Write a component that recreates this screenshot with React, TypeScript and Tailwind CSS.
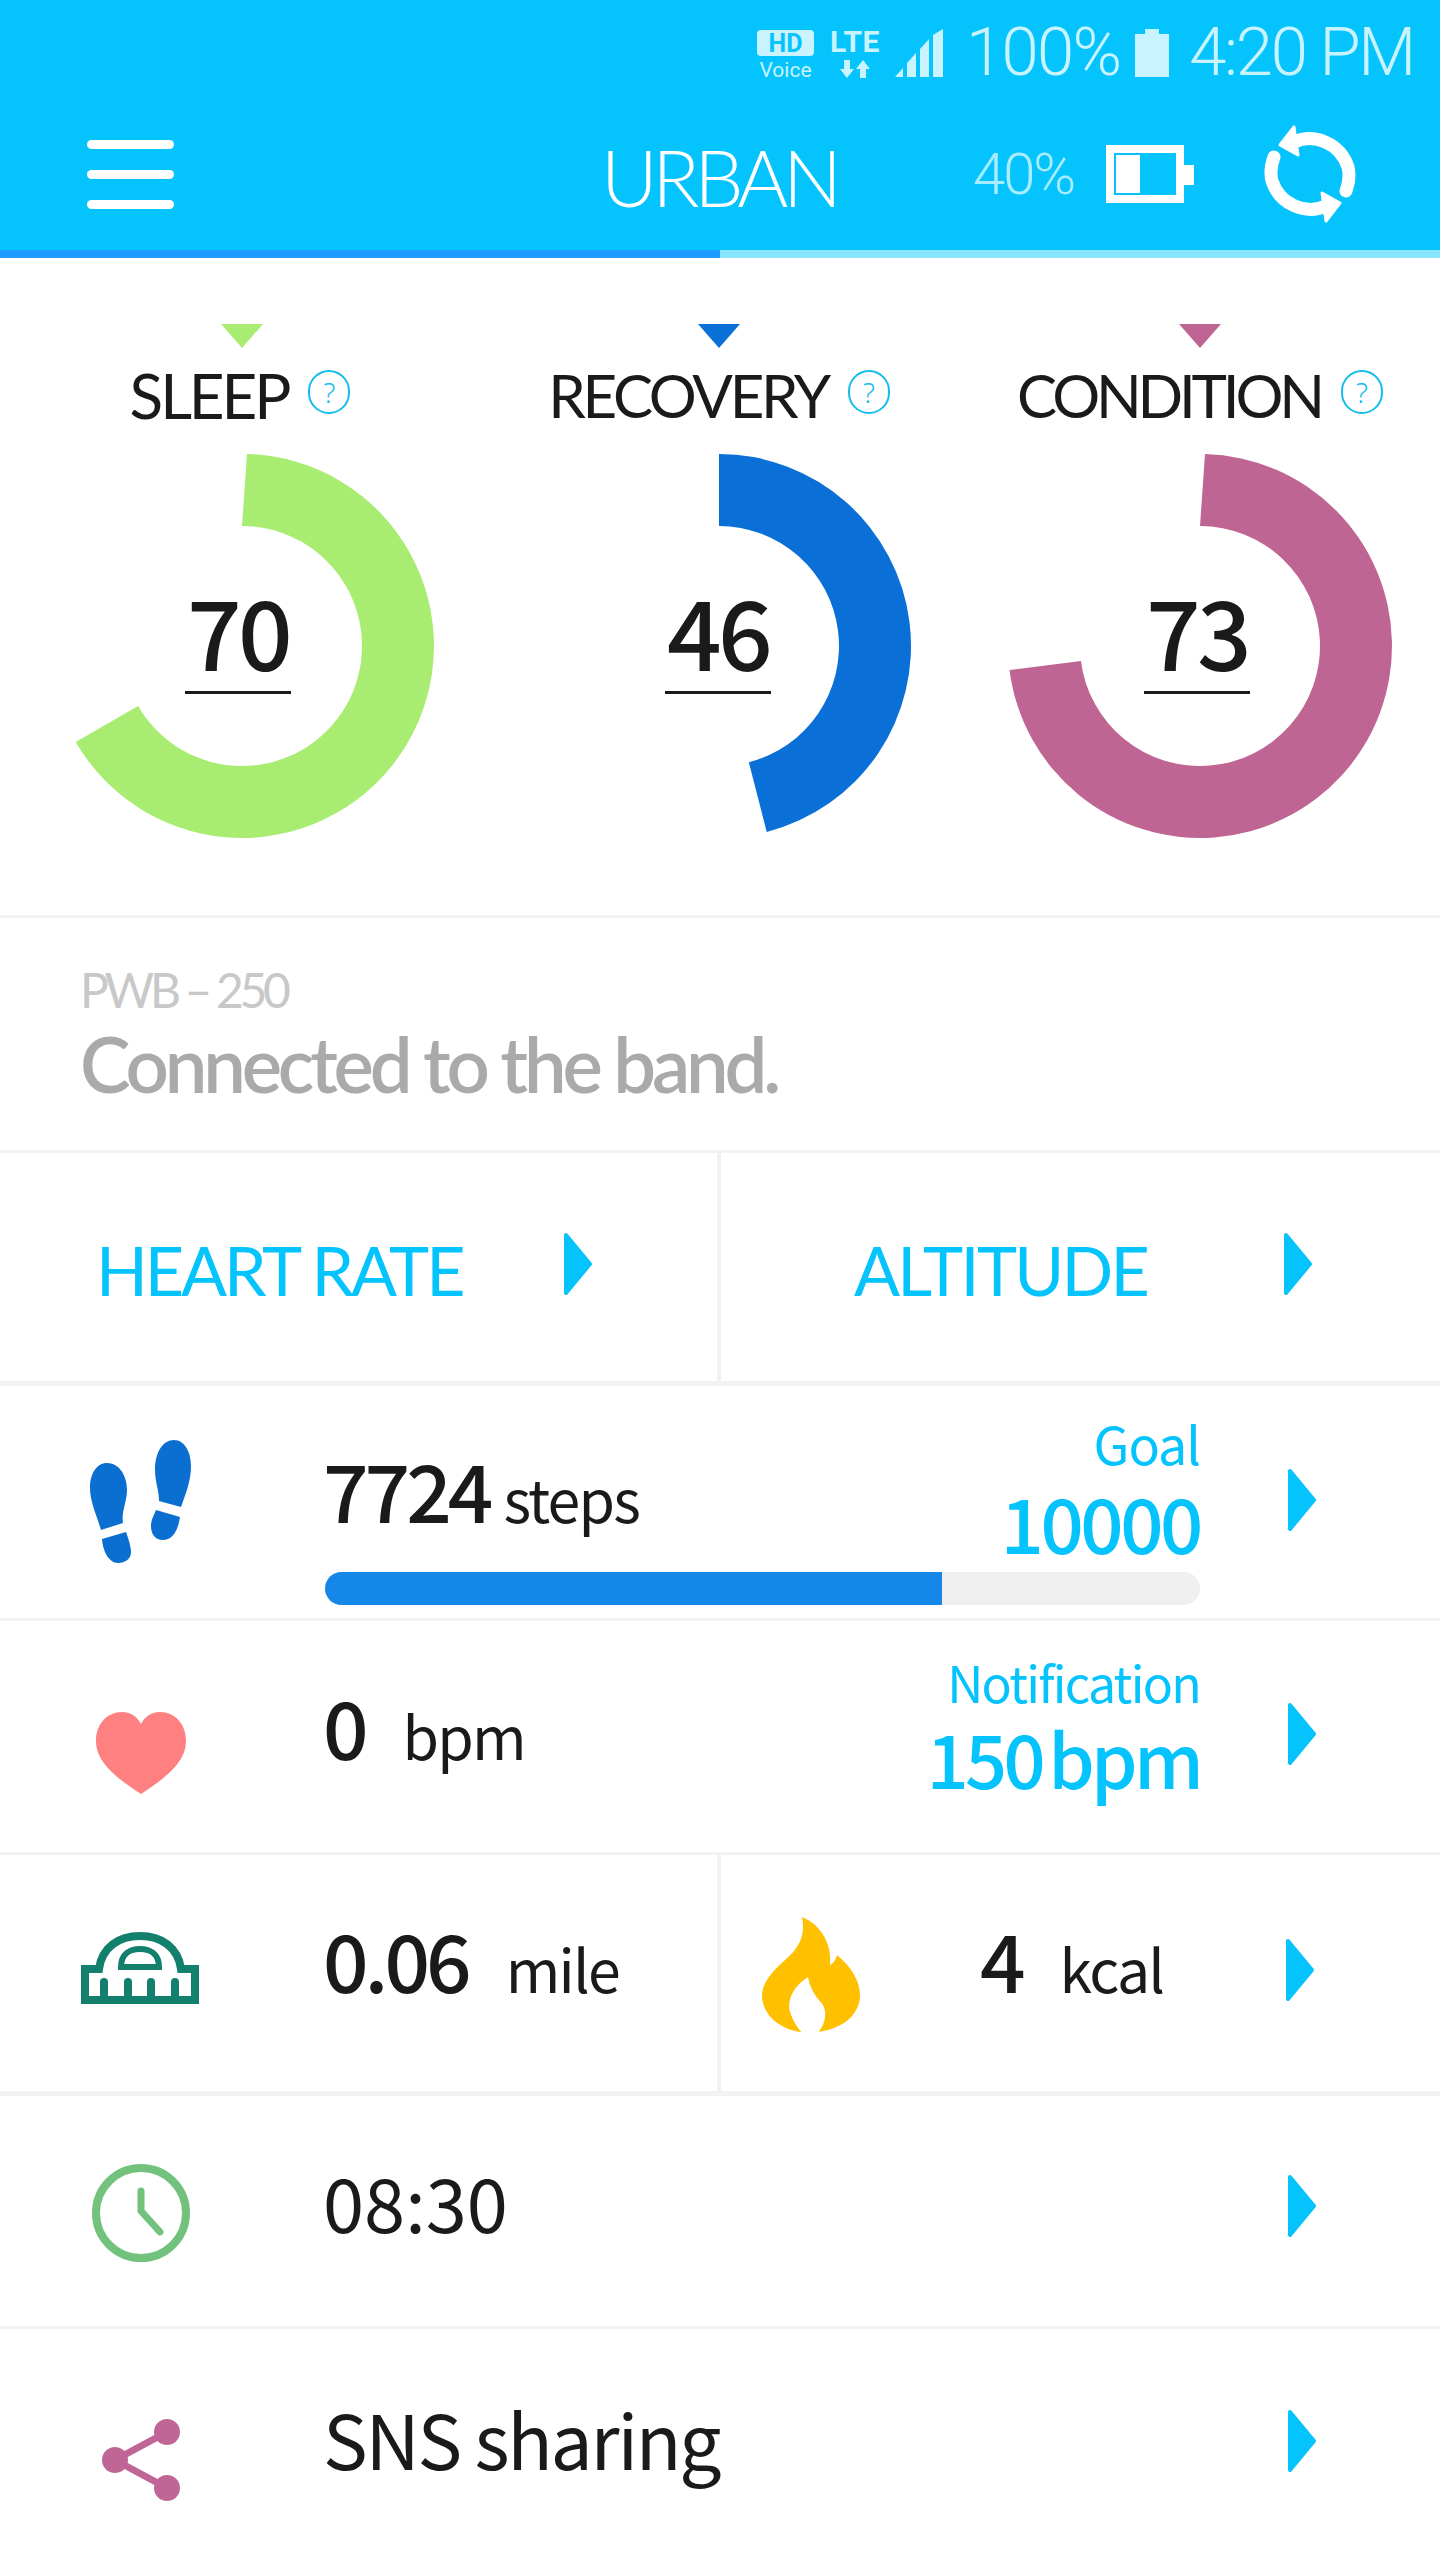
const kr = "font-['Noto_Sans_CJK_KR','Noto_Sans',sans-serif]";
const lato = "font-['Lato','Noto_Sans',sans-serif]";

function Chevron({ className = "" }: { className?: string }) {
  return (
    <svg viewBox="0 0 30 64" className={`h-[64px] w-[30px] shrink-0 ${className}`}>
      <path d="M3 3 L27 32 L3 61 Z" fill="#05c3fc" stroke="#05c3fc" strokeWidth="4" strokeLinejoin="round" />
    </svg>
  );
}

// sweep is in degrees: the drawn arc does not quite follow the number in the middle
function Gauge({ value, sweep, color, tilt = 0, numberClass }: { value: number; sweep: number; color: string; tilt?: number; numberClass: string }) {
  const R = 192;
  const r = 120;
  const a = (sweep * Math.PI) / 180;
  const large = sweep > 180 ? 1 : 0;
  const x1 = R + R * Math.sin(a);
  const y1 = R - R * Math.cos(a);
  const x2 = R + r * Math.sin(a);
  const y2 = R - r * Math.cos(a);
  return (
    <div className="relative h-[384px] w-[384px]">
      <svg viewBox="0 0 384 384" className="h-[384px] w-[384px]">
        <path
          d={`M${R + tilt} 0 A${R} ${R} 0 ${large} 1 ${x1} ${y1} L${x2} ${y2} A${r} ${r} 0 ${large} 0 ${R} ${R - r} Z`}
          fill={color}
        />
      </svg>
      <div className={`absolute top-[138px] flex h-[102px] w-[106px] items-center justify-center border-b-[3px] border-[#1a1a1a] pb-[24px] ${numberClass}`}>
        <span className={`${kr} text-[96px] font-medium leading-none tracking-[-0.04em] text-[#1a1a1a]`}>{value}</span>
      </div>
    </div>
  );
}

function GaugeCol({
  label,
  value,
  sweep,
  color,
  tilt,
  labelClass,
  numberClass,
  className = "",
}: {
  label: string;
  value: number;
  sweep: number;
  color: string;
  tilt?: number;
  labelClass: string;
  numberClass: string;
  className?: string;
}) {
  return (
    <div className={`flex flex-col items-center ${className}`}>
      <svg viewBox="0 0 42 24" className="mt-[66px] h-[24px] w-[42px]">
        <path d="M0 0 H42 L21 24 Z" fill={color} />
      </svg>
      <div className="mt-[17px] flex h-[60px] items-center gap-[20px]">
        <span className={`${lato} leading-none text-[#1a1a1a] ${labelClass}`}>{label}</span>
        <span className="mb-[6px] flex h-[44px] w-[42px] items-center justify-center rounded-full border-2 border-[#15bdee] font-['Noto_Sans',sans-serif] text-[28px] font-light leading-none text-[#15bdee]">
          ?
        </span>
      </div>
      <div className="mt-[29px]">
        <Gauge value={value} sweep={sweep} color={color} tilt={tilt} numberClass={numberClass} />
      </div>
    </div>
  );
}

function Feet() {
  return (
    <svg viewBox="0 0 102 124" className="h-[124px] w-[102px]" fill="#0a6fd0">
      <path d="M17 23 C7 23 0 33 0 48 C0 62 7 76 11 90 L33 83 C31 72 37 62 37 50 C37 34 28 23 17 23 Z" />
      <path d="M12 99 L36 92 C39 100 41 108 41 112 C41 119 35 123 28 123 C19 123 13 112 12 99 Z" />
      <path d="M84 0 C73 0 65 12 65 30 C65 42 69 50 69 61 L91 67 C95 55 101 42 101 26 C101 11 94 0 84 0 Z" />
      <path d="M66 70 L90 77 C88 90 83 100 73 100 C65 100 61 94 61 86 C61 80 64 75 66 70 Z" />
    </svg>
  );
}

function Heart() {
  return (
    <svg viewBox="0 0 90 82" className="h-[82px] w-[90px]" fill="#ff8080">
      <path d="M45 12 C41 4 34 0 26 0 C11 0 0 12 0 29 C0 52 24 68 45 82 C66 68 90 52 90 29 C90 12 79 0 64 0 C56 0 49 4 45 12 Z" />
    </svg>
  );
}

function Ruler() {
  return (
    <svg viewBox="0 0 118 72" className="h-[72px] w-[118px]" fill="none" stroke="#13806d">
      <path d="M4 37 H18 C21 15 38 4 59 4 C80 4 97 15 100 37 H114 V68 H4 Z" strokeWidth="8" />
      <path d="M40 35 C40 22 49 17 59 17 C69 17 78 22 78 35 Z" strokeWidth="6" />
      <path d="M23 64 V50 M47 64 V50 M70 64 V50 M94 64 V50" strokeWidth="8" strokeLinecap="round" />
    </svg>
  );
}

function Flame() {
  return (
    <svg viewBox="0 0 98 116" className="h-[116px] w-[98px]">
      <path
        d="M40 0 C44 20 36 32 22 44 C8 56 0 68 0 78 C0 98 18 112 38 115 H56 C80 112 98 98 98 78 C98 65 90 50 75 38 C74 42 72 46 68 48 C70 28 60 8 40 0 Z"
        fill="#ffc000"
      />
      <path d="M46 60 C30 70 25 85 28 95 C31 105 37 112 40 116 H56 C62 108 65 100 62 90 C60 84 50 80 46 60 Z" fill="#fff" />
    </svg>
  );
}

function Clock() {
  return (
    <svg viewBox="0 0 100 100" className="h-[100px] w-[100px]" fill="none" stroke="#72c27d" strokeWidth="8">
      <circle cx="50" cy="50" r="45" />
      <path d="M50 28 V48 L69 69" strokeWidth="7" strokeLinecap="round" strokeLinejoin="round" />
    </svg>
  );
}

function Share() {
  return (
    <svg viewBox="0 0 80 84" className="h-[84px] w-[80px]" fill="#c06696" stroke="#c06696">
      <path d="M66 14 L14 42 L66 70" fill="none" strokeWidth="7" />
      <circle cx="14" cy="42" r="13" strokeWidth="0" />
      <circle cx="66" cy="14" r="13" strokeWidth="0" />
      <circle cx="66" cy="70" r="13" strokeWidth="0" />
    </svg>
  );
}

function Refresh() {
  return (
    <svg viewBox="0 0 92 98" className="h-[98px] w-[92px]" fill="none" stroke="#fff" strokeWidth="13" strokeLinecap="round">
      <path d="M30 17 C50 8 76 18 84 42 C86 50 85 58 82 66" />
      <path d="M62 81 C42 90 16 80 8 56 C6 48 7 40 10 32" />
      <path d="M30 2 L16 20 L34 30 Z" fill="#fff" strokeWidth="3" strokeLinejoin="round" />
      <path d="M62 96 L76 78 L58 68 Z" fill="#fff" strokeWidth="3" strokeLinejoin="round" />
    </svg>
  );
}

function Hamburger() {
  return (
    <div className="flex w-[87px] flex-col gap-[21px]">
      <div className="h-[9px] rounded-full bg-white" />
      <div className="h-[9px] rounded-full bg-white" />
      <div className="h-[9px] rounded-full bg-white" />
    </div>
  );
}

function BandBattery() {
  return (
    <svg viewBox="0 0 88 58" className="h-[58px] w-[88px]">
      <path fillRule="evenodd" d="M0 0 H78 V20 H88 V40 H78 V58 H0 Z M8 8 V50 H70 V8 Z" fill="#fff" />
      <rect x="10" y="10" width="24" height="38" fill="#fff" />
    </svg>
  );
}

function StatusBar() {
  return (
    <div className="flex h-[90px] items-end justify-end pr-[26px] text-[#c8f3ff]">
      <div className="mb-[9px] flex w-[57px] flex-col items-center">
        <div className="flex h-[26px] w-[57px] items-center justify-center rounded-[4px] bg-[#c8f3ff]">
          <span className="font-['Roboto',sans-serif] text-[25px] font-bold leading-none text-[#05c3fc]">HD</span>
        </div>
        <span className="mt-[4px] font-['Roboto',sans-serif] text-[21px] leading-none">Voice</span>
      </div>
      <div className="mb-[12px] ml-[16px] flex w-[50px] flex-col items-center">
        <span className="font-['Roboto',sans-serif] text-[30px] font-bold leading-none tracking-[0.02em]">LTE</span>
        <svg viewBox="0 0 30 18" className="mt-[3px] h-[18px] w-[30px]" fill="#c8f3ff">
          <path d="M4 0 H10 V9 H14 L7 18 L0 9 H4 Z" />
          <path d="M20 18 H26 V9 H30 L23 0 L16 9 H20 Z" />
        </svg>
      </div>
      <svg viewBox="0 0 48 48" className="mb-[13px] ml-[15px] h-[48px] w-[48px]" fill="#c8f3ff">
        <path d="M0 48 L8 39 V48 Z M12 48 V34 L21 24 V48 Z M25 48 V20 L34 10 V48 Z M38 48 V6 L48 0 V48 Z" />
      </svg>
      <span className="mb-[4px] ml-[23px] font-['Roboto',sans-serif] text-[67px] font-light leading-none tracking-[-0.025em]">100%</span>
      <svg viewBox="0 0 34 48" className="mb-[13px] ml-[15px] h-[48px] w-[34px]" fill="#c8f3ff">
        <path d="M10 0 H24 V5 H34 V48 H0 V5 H10 Z" />
      </svg>
      <span className="mb-[4px] ml-[20px] font-['Roboto',sans-serif] text-[67px] font-light leading-none tracking-[-0.035em]">4:20 PM</span>
    </div>
  );
}

function Header() {
  return (
    <header className="bg-[#05c3fc]">
      <div className="h-[250px]">
        <StatusBar />
        <div className="flex h-[160px] items-center pt-[8px] pl-[87px]">
          <Hamburger />
          <span className={`${lato} ml-[427px] mt-[6px] w-[372px] text-[78px] font-light leading-none tracking-[-0.07em] text-white`}>URBAN</span>
          <span className="w-[133px] font-['Roboto',sans-serif] text-[58px] font-light leading-none tracking-[-0.035em] text-[#a8ecff]">40%</span>
          <BandBattery />
          <div className="ml-[70px]">
            <Refresh />
          </div>
        </div>
      </div>
      <div className="flex h-[8px] bg-[#8ae6ff]">
        <div className="w-[720px] bg-[#1e9cff]" />
      </div>
    </header>
  );
}

function Big({ children, className = "" }: { children: React.ReactNode; className?: string }) {
  return <span className={`${kr} text-[80px] font-medium leading-none tracking-[-0.05em] text-[#1a1a1a] ${className}`}>{children}</span>;
}

function Unit({ children, className = "" }: { children: React.ReactNode; className?: string }) {
  return <span className={`${kr} text-[59px] leading-none tracking-[-0.03em] text-[#1a1a1a] ${className}`}>{children}</span>;
}

function Row({
  icon,
  heightClass,
  iconClass = "",
  borderClass = "border-b-[3px] border-[#f2f2f2]",
  children,
}: {
  icon: React.ReactNode;
  heightClass: string;
  iconClass?: string;
  borderClass?: string;
  children: React.ReactNode;
}) {
  return (
    <div className={`flex items-center ${heightClass} ${borderClass}`}>
      <div className="flex w-[325px] shrink-0 justify-start pl-[80px]">
        <div className={`flex w-[122px] justify-center ${iconClass}`}>{icon}</div>
      </div>
      {children}
    </div>
  );
}

export default function App() {
  return (
    <div className="h-[2560px] w-[1440px] overflow-hidden bg-white">
      <Header />

      <section className="flex h-[660px] border-b-[3px] border-[#f2f2f2]">
        <GaugeCol
          label="SLEEP"
          value={70}
          sweep={240}
          tilt={5}
          color="#a9ec72"
          labelClass="text-[62px] tracking-[-0.05em] ml-[-4px]"
          numberClass="left-[135px]"
          className="w-[484px]"
        />
        <GaugeCol
          label="RECOVERY"
          value={46}
          sweep={165.6}
          color="#0a6fd6"
          labelClass="text-[60px] tracking-[-0.055em]"
          numberClass="left-[138px]"
          className="w-[470px]"
        />
        <GaugeCol
          label="CONDITION"
          value={73}
          sweep={262.8}
          tilt={5}
          color="#bf6593"
          labelClass="text-[60px] tracking-[-0.07em]"
          numberClass="left-[136px]"
          className="w-[486px] pl-[6px]"
        />
      </section>

      <section className="flex h-[235px] flex-col justify-center border-b-[3px] border-[#f2f2f2] pl-[80px]">
        <span className={`${lato} text-[48px] leading-none tracking-[-0.09em] text-[#c8c8c8]`}>PWB – 250</span>
        <span className={`${lato} mt-[12px] text-[76px] font-semibold leading-none tracking-[-0.055em] text-[#aaaaaa]`}>Connected to the band.</span>
      </section>

      <section className="flex h-[233px] border-b-[5px] border-[#f2f2f2]">
        <div className="flex w-[721px] items-center border-r-[4px] border-[#f2f2f2] pl-[96px]">
          <span className={`${lato} mt-[6px] w-[467px] text-[68px] leading-none tracking-[-0.045em] text-[#05c3fc]`}>HEART RATE</span>
          <Chevron className="mb-[6px]" />
        </div>
        <div className="flex flex-1 items-center pl-[133px]">
          <span className={`${lato} mt-[6px] w-[429px] text-[68px] leading-none tracking-[-0.04em] text-[#05c3fc]`}>ALTITUDE</span>
          <Chevron className="mb-[6px]" />
        </div>
      </section>

      <Row icon={<Feet />} heightClass="h-[235px]">
        <div className="flex w-[875px] flex-col pt-[18px]">
          <div className="flex h-[140px] items-center justify-between">
            <div className="flex items-baseline gap-[14px]">
              <Big className="ml-[-2px]">7724</Big>
              <Unit>steps</Unit>
            </div>
            <div className="flex flex-col items-end">
              <span className={`${kr} text-[52px] leading-none tracking-[-0.02em] text-[#05c3fc]`}>Goal</span>
              <span className={`${kr} mt-[14px] text-[76px] font-medium leading-none tracking-[-0.045em] text-[#05c3fc]`}>10000</span>
            </div>
          </div>
          <div className="mt-[14px] h-[33px] overflow-hidden rounded-full bg-[#f0f0f0]">
            <div className="h-full w-[617px] bg-[#1487e8]" />
          </div>
        </div>
        <Chevron className="ml-[87px] mb-[4px]" />
      </Row>

      <Row icon={<Heart />} heightClass="h-[234px]" iconClass="pt-[32px]">
        <div className="flex w-[875px] items-center justify-between">
          <div className="mb-[24px] flex items-baseline gap-[38px]">
            <Big className="ml-[-2px]">0</Big>
            <Unit>bpm</Unit>
          </div>
          <div className="mb-[24px] flex flex-col items-end">
            <span className={`${kr} text-[50px] leading-none tracking-[-0.035em] text-[#05c3fc]`}>Notification</span>
            <span className={`${kr} mt-[14px] text-[74px] font-medium leading-none tracking-[-0.05em] text-[#05c3fc] [word-spacing:-0.09em]`}>150 bpm</span>
          </div>
        </div>
        <Chevron className="ml-[87px] mb-[6px]" />
      </Row>

      <section className="flex h-[241px] border-b-[5px] border-[#f2f2f2]">
        <div className="flex w-[721px] items-center border-r-[4px] border-[#f2f2f2]">
          <div className="mb-[10px] flex w-[325px] shrink-0 justify-center pr-[45px]">
            <Ruler />
          </div>
          <div className="mb-[30px] flex items-baseline gap-[38px]">
            <Big className="ml-[-2px]">0.06</Big>
            <Unit>mile</Unit>
          </div>
        </div>
        <div className="flex flex-1 items-center">
          <div className="ml-[41px] mt-[4px]">
            <Flame />
          </div>
          <div className="mb-[30px] ml-[120px] flex w-[307px] items-baseline gap-[38px]">
            <Big>4</Big>
            <Unit>kcal</Unit>
          </div>
          <Chevron className="ml-[-2px] mb-[6px]" />
        </div>
      </section>

      <Row icon={<Clock />} heightClass="h-[233px]" iconClass="pt-[4px]">
        <span className={`${kr} mb-[20px] ml-[-2px] w-[877px] text-[74px] leading-none text-[#1a1a1a]`}>08:30</span>
        <Chevron className="ml-[87px] mb-[10px]" />
      </Row>

      <Row icon={<Share />} heightClass="h-[233px]" iconClass="pt-[28px]" borderClass="">
        <span className={`${kr} mb-[16px] ml-[-2px] w-[877px] text-[75px] leading-none tracking-[-0.03em] text-[#1a1a1a]`}>SNS sharing</span>
        <Chevron className="ml-[87px] mb-[10px]" />
      </Row>
    </div>
  );
}
